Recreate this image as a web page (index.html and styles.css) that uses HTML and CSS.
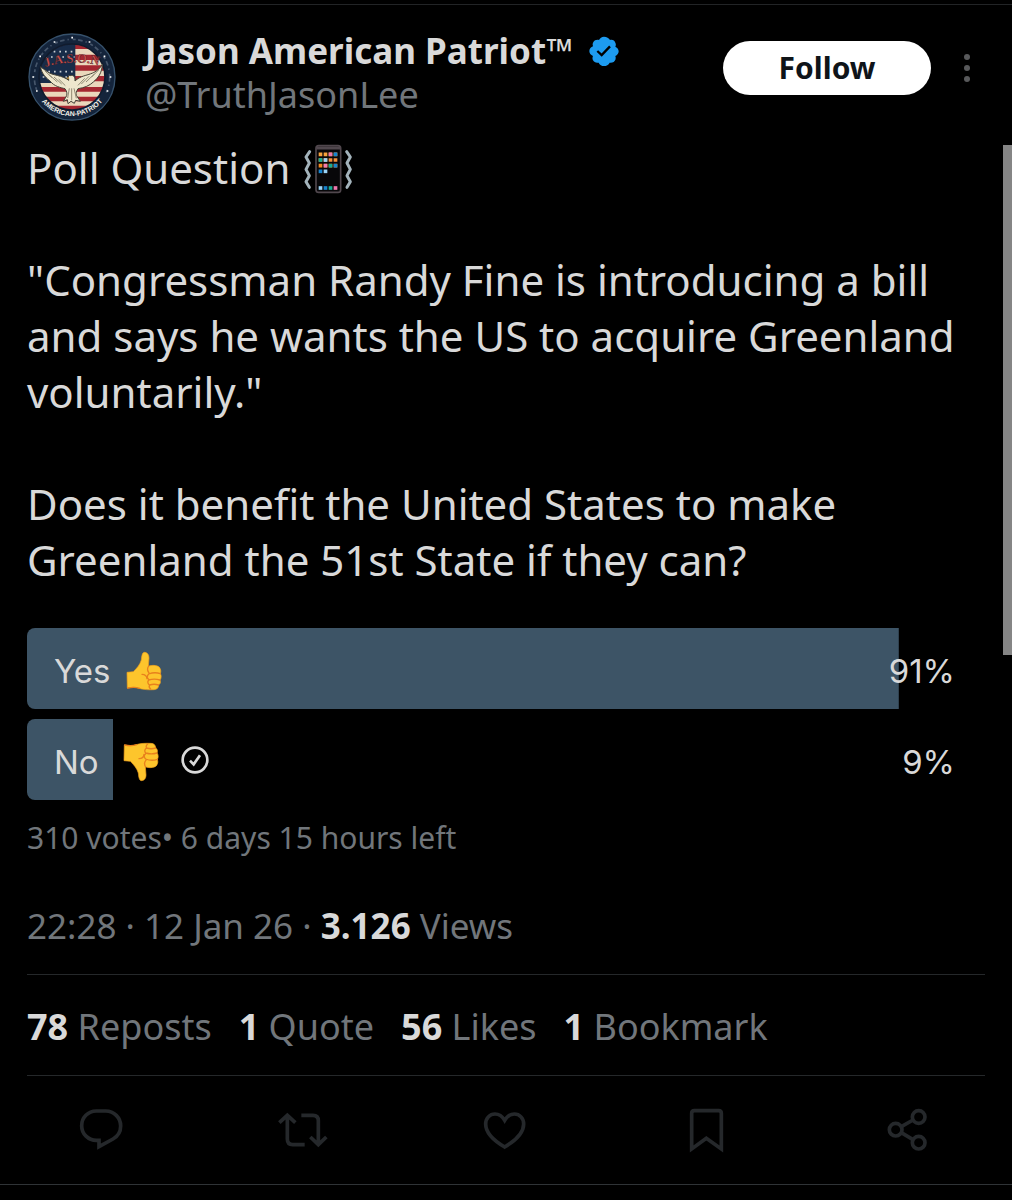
FILE: index.html
```html
<!DOCTYPE html>
<html lang="en">
<head>
<meta charset="utf-8">
<meta name="viewport" content="width=device-width, initial-scale=1">
<title>Post by Jason American Patriot™</title>
<link rel="stylesheet" href="styles.css">
</head>
<body>
<svg class="defs" aria-hidden="true">
  <symbol id="thumb" viewBox="0 0 108 118">
    <path d="M3 63L22 61C33 50 42 40 46 26C47 14 49 3 55 3C64 3 69 10 69 20L67 45C80 39 100 43 102 51C106 57 104 64 103 67C107 72 106 82 102 86C105 92 103 98 98 101C98 110 92 115 84 115C70 116 50 115 40 111C28 106 15 108 4 110Z" fill="#fdc52c" stroke="#f2a01c" stroke-width="2"/>
    <path d="M68 44C60 56 67 62 70 66M103 67C92 63 78 64 68 68C62 74 63 80 68 84M102 86C92 83 78 83 68 86C63 92 66 98 71 101M98 101C88 98 80 98 71 101C68 106 70 110 74 113M48 69C56 69 62 74 63 82M5 110C18 107 30 107 41 111" fill="none" stroke="#e8811d" stroke-width="4" stroke-linecap="round"/>
  </symbol>
</svg>
<main class="post">
  <header class="author">
    <svg class="avatar" viewBox="0 0 264 264" role="img" aria-label="Jason American Patriot">
      <defs>
        <clipPath id="disc"><circle cx="132" cy="132" r="99"/></clipPath>
        <path id="arc-top" d="M46 104Q132 76 218 98"/>
        <path id="arc-low" d="M15 132A117 117 0 0 0 249 132"/>
      </defs>
      <circle cx="132" cy="132" r="129" fill="#14243b" stroke="#36516b" stroke-width="4"/>
      <circle cx="132" cy="132" r="113" fill="none" stroke="#46566b" stroke-width="5" stroke-dasharray="14 9 4 12 9 7"/>
      <g clip-path="url(#disc)">
        <path fill="#ead7bb" d="M30 30H236V236H30Z"/>
        <path fill="#a52730" d="M30 31H236V48H30ZM30 65H236V81H30ZM30 97H236V113H30ZM30 129H236V145H30ZM30 162H236V176H30ZM30 191H236V205H30ZM30 218H236V236H30Z"/>
        <path fill="#182c49" d="M30 30H142V150H30Z"/>
        <path d="M60 56H140M52 72H140M44 116H140M44 132H140" stroke="#c9cfd3" stroke-width="5" stroke-dasharray="5 12"/>
      </g>
      <circle cx="132" cy="132" r="99" fill="none" stroke="#101b2d" stroke-width="5"/>
      <path d="M28 180A115 115 0 0 0 236 180" fill="none" stroke="#14243b" stroke-width="26"/>
      <text class="seal-name"><textPath href="#arc-top" startOffset="50%" text-anchor="middle">J.A.S.O.N</textPath></text>
      <path d="M126 128C119 125 122 132 122 142C104 126 72 128 58 116C50 110 43 106 38 101C40 124 58 137 66 144C78 160 98 164 111 167C116 174 118 181 116 188L106 205L118 200L120 212L129 205L139 211L143 202L157 205L145 187C142 181 146 174 150 167C170 164 184 158 196 147C210 135 222 120 223 94C215 109 203 116 194 120C176 128 157 128 141 144C141 132 138 125 126 128Z" fill="#eee7cd" stroke="#454337" stroke-width="3"/>
      <path d="M50 113L72 134M62 124L88 147M78 132L101 153M92 138L112 158M212 111L190 133M199 123L174 147M183 130L160 153M170 136L150 157M124 166L119 195M131 166V202M138 166L145 196" fill="none" stroke="#918b75" stroke-width="3"/>
      <path d="M122 132L114 135L122 139Z" fill="#d49b3b"/>
      <path d="M13 132h5M34 70h5M77 27h5M130 14h5M182 27h5M227 70h5M245 132h5M236 174h5M24 174h5" stroke="#fff" stroke-width="5"/>
      <text class="seal-motto"><textPath href="#arc-low" startOffset="50%" text-anchor="middle">AMERICAN-PATRIOT</textPath></text>
    </svg>
    <div class="identity">
      <h1 class="name">Jason American Patriot™
        <svg class="verified" viewBox="0 0 90 90" role="img" aria-label="Verified">
          <path d="M45 2C53 2 60 6 63 12C70 10 77 13 79 20C81 24 81 28 79 32C86 35 89 41 89 46C89 52 85 58 79 60C82 68 79 74 74 78C70 80 66 81 62 80C59 87 52 90 45 90C38 90 32 87 29 80C22 82 15 79 12 73C10 69 10 64 12 60C5 57 1 51 1 45C1 39 6 33 12 31C9 24 12 17 18 13C22 11 26 10 30 12C33 6 38 2 45 2Z" fill="#1d9bf0"/>
          <path d="M25 45L38 57L63 31" fill="none" stroke="#000" stroke-width="7"/>
        </svg>
      </h1>
      <p class="handle">@TruthJasonLee</p>
    </div>
    <div class="author-actions">
      <button class="follow" type="button">Follow</button>
      <button class="more" type="button" aria-label="More"><svg viewBox="0 0 8 28"><circle cx="4" cy="3" r="3"/><circle cx="4" cy="14" r="3"/><circle cx="4" cy="25" r="3"/></svg></button>
    </div>
  </header>

  <div class="body">
    <p>Poll Question <svg class="phone" viewBox="0 0 153 150" role="img" aria-label="Vibrating phone">
      <rect x="39" y="5" width="74" height="140" rx="8" fill="#080709" stroke="#50474d" stroke-width="5"/>
      <path d="M40 12H112" stroke="#50474d" stroke-width="9"/>
      <g fill="none" stroke-width="11" stroke-dasharray="11 4">
        <path d="M47 31H104" stroke="#f6a13c"/><path d="M77 31H89" stroke="#ef78ae"/><path d="M92 31H103" stroke="#1684cf"/>
        <path d="M47 48H104" stroke="#f6923c"/><path d="M47 48H58" stroke="#18ad93"/><path d="M62 48H73" stroke="#9cd5f8"/>
        <path d="M47 65H104" stroke="#f38a20"/><path d="M62 65H73" stroke="#f27bb0"/><path d="M77 65H88" stroke="#18ad93"/><path d="M92 65H103" stroke="#1684cf"/>
        <path d="M47 82H58" stroke="#1684cf"/><path d="M62 82H73" stroke="#9cd5f8"/>
        <path d="M47 132H58" stroke="#9cd5f8"/><path d="M62 132H73" stroke="#1684cf"/><path d="M77 132H88" stroke="#18ad93"/><path d="M92 132H103" stroke="#ef78ae"/>
      </g>
      <path d="M20 23L9 39L19 57L9 76L19 95L9 113L19 130M131 23L142 39L132 57L142 76L132 95L142 113L132 130" fill="none" stroke="#a3b3bb" stroke-width="9" stroke-linejoin="round" stroke-linecap="round"/>
    </svg></p>
    <p>"Congressman Randy Fine is introducing a bill and says he wants the US to acquire Greenland voluntarily."</p>
    <p>Does it benefit the United States to make Greenland the 51st State if they can?</p>
  </div>

  <ul class="poll">
    <li class="option" style="--share: 91%">
      <span>Yes</span>
      <svg class="thumb" role="img" aria-label="Thumbs up"><use href="#thumb"/></svg>
      <span class="percent">91%</span>
    </li>
    <li class="option" style="--share: 9%">
      <span>No</span>
      <svg class="thumb" viewBox="0 0 108 118" role="img" aria-label="Thumbs down"><use href="#thumb" width="108" height="118" transform="translate(0 118) scale(1 -1)"/></svg>
      <svg class="chosen" viewBox="0 0 84 84" role="img" aria-label="Your vote"><circle cx="42" cy="42" r="37"/><path d="M27 44L38 55L57 28"/></svg>
      <span class="percent">9%</span>
    </li>
  </ul>
  <p class="votes">310 votes• 6 days 15 hours left</p>

  <p class="meta">22:28 · 12 Jan 26 · <strong>3.126</strong> Views</p>
  <div class="stats">
    <a href="#reposts"><strong>78</strong> Reposts</a>
    <a href="#quotes"><strong>1</strong> Quote</a>
    <a href="#likes"><strong>56</strong> Likes</a>
    <a href="#bookmarks"><strong>1</strong> Bookmark</a>
  </div>
  <div class="actions">
    <button type="button" aria-label="Reply"><svg viewBox="0 0 144 144"><path d="M58 103H66V122L108 99C122 91 131 77 131 60C131 35 111 15 86 15H58C33 15 14 35 14 59C14 84 34 103 58 103Z"/></svg></button>
    <button type="button" aria-label="Repost"><svg viewBox="0 0 144 144"><path d="M1 50L25 28L49 50M25 28V99C25 110 31 116 41 116H77M67 28H102C112 28 118 34 118 44V116M94 93L118 116L142 93"/></svg></button>
    <button type="button" aria-label="Like"><svg viewBox="0 0 144 144"><path d="M71 43C62 28 52 24 42 24C26 24 14 37 14 54C14 84 42 106 71 123C100 106 128 84 128 54C128 37 116 24 100 24C90 24 80 28 71 43Z"/></svg></button>
    <button type="button" aria-label="Bookmark"><svg viewBox="0 0 144 144"><path d="M29 129V22C29 17 32 14 37 14H110C115 14 118 17 118 22V129L73 97Z"/></svg></button>
    <button type="button" aria-label="Share"><svg viewBox="0 0 144 144"><path d="M52 62L87 42M52 80L87 101"/><circle cx="35" cy="71" r="19"/><circle cx="104" cy="33" r="19"/><circle cx="104" cy="110" r="19"/></svg></button>
  </div>
</main>
<div class="scroll-thumb"></div>
</body>
</html>
```
FILE: styles.css
```css
* { box-sizing: border-box; }

body {
  position: relative;
  margin: 0;
  padding-top: 4px;
  background: #000;
  color: #d9d9d9;
  font-family: "Noto Sans", "Open Sans", sans-serif;
}

h1, p, ul { margin: 0; padding: 0; }
svg { display: block; overflow: visible; }
button { padding: 0; border: 0; background: none; font: inherit; cursor: pointer; }
a { color: inherit; text-decoration: none; }
strong { color: #d9d9d9; font-weight: 700; }

.defs { position: absolute; width: 0; height: 0; }

.post {
  padding: 24px 27px 0;
  border-top: 1px solid #222426;
  border-bottom: 1px solid #2f3336;
}

.author { display: flex; align-items: flex-start; }
.avatar { flex: none; width: 88px; height: 88px; margin: 4px 0 0 1px; }
.seal-name { font: 700 38px "Liberation Serif", serif; fill: #d2504c; stroke: #26151c; stroke-width: 1px; }
.seal-motto { font: 700 21px "Liberation Sans", sans-serif; fill: #f4f1e8; }

.identity { flex: 1; min-width: 0; margin-left: 29px; line-height: 44px; font-size: 36px; }
.name { display: flex; align-items: center; gap: 16px; font-size: 35px; font-weight: 700; }
.verified { width: 30px; height: 30px; }
.handle { color: #71767b; }

.author-actions { display: flex; align-items: center; gap: 32px; margin: 12px 14px 0 0; }
.follow {
  width: 208px;
  height: 54px;
  border-radius: 27px;
  background: #fff;
  color: #0f1419;
  font-size: 30px;
  font-weight: 700;
  line-height: 54px;
}
.more svg { width: 8px; height: 28px; fill: #58595b; }

.body {
  display: grid;
  gap: 56px;
  margin-top: 19px;
  font-size: 42px;
  line-height: 56px;
}
.phone { display: inline-block; width: 51px; height: 50px; margin-left: 2px; vertical-align: -10px; }

.poll {
  display: grid;
  gap: 10px;
  margin: 40px 0 0;
  list-style: none;
  font-family: Inter, sans-serif;
  font-size: 33px;
}
.option {
  display: flex;
  align-items: center;
  height: 81px;
  padding: 4px 30px 0 27px;
  border-radius: 8px 0 0 8px;
  background: linear-gradient(#3d5466, #3d5466) 0 0 / var(--share) 100% no-repeat;
}
.thumb { width: 36px; height: 40px; margin-left: 15px; }
.option:last-child .thumb { margin-left: 24px; }
.chosen { width: 28px; height: 28px; margin: 0 0 4px 22px; fill: none; stroke: #d9d9d9; stroke-width: 8; }
.percent { margin-left: auto; }

.votes { margin-top: 18px; color: #71767b; font-size: 30px; line-height: 40px; }

.meta, .stats { border-bottom: 1px solid #25282a; color: #71767b; line-height: 48px; }
.meta { margin-top: 44px; padding-bottom: 24px; font-size: 35px; }
.stats { display: flex; gap: 27px; padding: 28px 0 24px; font-size: 36px; }

.actions {
  display: flex;
  align-items: center;
  justify-content: space-between;
  height: 108px;
  padding: 0 53px 0 50px;
}
.actions svg { width: 48px; height: 48px; fill: none; stroke: #25282b; stroke-width: 11; }

.scroll-thumb { position: absolute; top: 145px; right: 0; width: 9px; height: 510px; background: #858585; }
```
